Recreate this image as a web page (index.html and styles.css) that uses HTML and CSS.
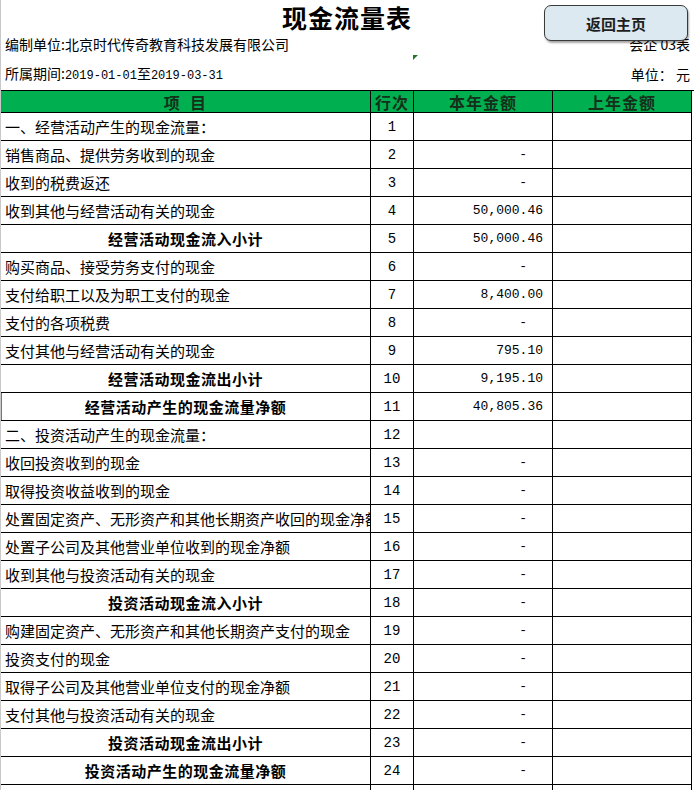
FILE: index.html
```html
<!DOCTYPE html>
<html lang="zh-CN">
<head>
<meta charset="utf-8">
<title>现金流量表</title>
<link rel="stylesheet" href="styles.css">
</head>
<body>
<div class="page">
  <header class="top">
    <h1 class="title">现金流量表</h1>
    <div class="info-row info-row--unit">
      <span class="label">编制单位:北京时代传奇教育科技发展有限公司</span>
      <span class="label">会企 03表</span>
    </div>
    <div class="info-row info-row--period">
      <span class="label">所属期间:<span class="date">2019-01-01</span>至<span class="date">2019-03-31</span></span>
      <span class="label">单位：&nbsp;元</span>
    </div>
    <button class="home-btn" type="button">返回主页</button>
    <span class="cell-flag"></span>
  </header>

  <div class="sheet">
    <div class="cell head">项&nbsp;&nbsp;目</div>
    <div class="cell head">行次</div>
    <div class="cell head">本年金额</div>
    <div class="cell head">上年金额</div>

    <div class="cell item">一、经营活动产生的现金流量：</div><div class="cell no">1</div><div class="cell amt"></div><div class="cell amt"></div>
    <div class="cell item">销售商品、提供劳务收到的现金</div><div class="cell no">2</div><div class="cell amt"><span class="dash">-</span></div><div class="cell amt"></div>
    <div class="cell item">收到的税费返还</div><div class="cell no">3</div><div class="cell amt"><span class="dash">-</span></div><div class="cell amt"></div>
    <div class="cell item">收到其他与经营活动有关的现金</div><div class="cell no">4</div><div class="cell amt">50,000.46</div><div class="cell amt"></div>
    <div class="cell item sub">经营活动现金流入小计</div><div class="cell no">5</div><div class="cell amt">50,000.46</div><div class="cell amt"></div>
    <div class="cell item">购买商品、接受劳务支付的现金</div><div class="cell no">6</div><div class="cell amt"><span class="dash">-</span></div><div class="cell amt"></div>
    <div class="cell item">支付给职工以及为职工支付的现金</div><div class="cell no">7</div><div class="cell amt">8,400.00</div><div class="cell amt"></div>
    <div class="cell item">支付的各项税费</div><div class="cell no">8</div><div class="cell amt"><span class="dash">-</span></div><div class="cell amt"></div>
    <div class="cell item">支付其他与经营活动有关的现金</div><div class="cell no">9</div><div class="cell amt">795.10</div><div class="cell amt"></div>
    <div class="cell item sub">经营活动现金流出小计</div><div class="cell no">10</div><div class="cell amt">9,195.10</div><div class="cell amt"></div>
    <div class="cell item sub selected">经营活动产生的现金流量净额</div><div class="cell no">11</div><div class="cell amt">40,805.36</div><div class="cell amt"></div>
    <div class="cell item">二、投资活动产生的现金流量：</div><div class="cell no">12</div><div class="cell amt"></div><div class="cell amt"></div>
    <div class="cell item">收回投资收到的现金</div><div class="cell no">13</div><div class="cell amt"><span class="dash">-</span></div><div class="cell amt"></div>
    <div class="cell item">取得投资收益收到的现金</div><div class="cell no">14</div><div class="cell amt"><span class="dash">-</span></div><div class="cell amt"></div>
    <div class="cell item">处置固定资产、无形资产和其他长期资产收回的现金净额</div><div class="cell no">15</div><div class="cell amt"><span class="dash">-</span></div><div class="cell amt"></div>
    <div class="cell item">处置子公司及其他营业单位收到的现金净额</div><div class="cell no">16</div><div class="cell amt"><span class="dash">-</span></div><div class="cell amt"></div>
    <div class="cell item">收到其他与投资活动有关的现金</div><div class="cell no">17</div><div class="cell amt"><span class="dash">-</span></div><div class="cell amt"></div>
    <div class="cell item sub">投资活动现金流入小计</div><div class="cell no">18</div><div class="cell amt"><span class="dash">-</span></div><div class="cell amt"></div>
    <div class="cell item">购建固定资产、无形资产和其他长期资产支付的现金</div><div class="cell no">19</div><div class="cell amt"><span class="dash">-</span></div><div class="cell amt"></div>
    <div class="cell item">投资支付的现金</div><div class="cell no">20</div><div class="cell amt"><span class="dash">-</span></div><div class="cell amt"></div>
    <div class="cell item">取得子公司及其他营业单位支付的现金净额</div><div class="cell no">21</div><div class="cell amt"><span class="dash">-</span></div><div class="cell amt"></div>
    <div class="cell item">支付其他与投资活动有关的现金</div><div class="cell no">22</div><div class="cell amt"><span class="dash">-</span></div><div class="cell amt"></div>
    <div class="cell item sub">投资活动现金流出小计</div><div class="cell no">23</div><div class="cell amt"><span class="dash">-</span></div><div class="cell amt"></div>
    <div class="cell item sub">投资活动产生的现金流量净额</div><div class="cell no">24</div><div class="cell amt"><span class="dash">-</span></div><div class="cell amt"></div>
    <div class="cell item">三、筹资活动产生的现金流量：</div><div class="cell no">25</div><div class="cell amt"></div><div class="cell amt"></div>
  </div>
</div>
</body>
</html>
```

FILE: styles.css
```css
html, body {
  margin: 0;
  padding: 0;
  background: #ffffff;
  overflow: hidden;
}

.page {
  position: relative;
  width: 693px;
  height: 790px;
  border-left: 1px solid #c9c9c9;
  font-family: "Noto Sans CJK SC", "Noto Sans", sans-serif;
  color: #000;
  overflow: hidden;
}

.top {
  position: relative;
  height: 90px;
  display: flex;
  flex-direction: column;
}

.title {
  margin: 0 0 0 -1px;
  height: 34px;
  line-height: 34px;
  font-size: 25px;
  font-weight: 700;
  text-align: center;
  letter-spacing: 1px;
}

.info-row {
  display: flex;
  justify-content: space-between;
  align-items: center;
  padding: 0 4px;
  font-size: 14px;
}

.info-row--unit {
  height: 20px;
}

.info-row--period {
  height: 32px;
  padding-top: 4px;
}

.label {
  line-height: 20px;
  white-space: nowrap;
}

.date {
  font-family: "Liberation Mono", monospace;
  font-size: 12px;
}

.home-btn {
  position: absolute;
  left: 543px;
  top: 5px;
  width: 144px;
  height: 36px;
  border: 1px solid #3a3a3a;
  border-radius: 7px;
  background: #dce9f0;
  box-shadow: 1px 2px 2px rgba(0, 0, 0, 0.35);
  font-family: "Noto Sans CJK SC", sans-serif;
  font-size: 15px;
  font-weight: 700;
  color: #1e1e1e;
  padding: 0;
}

.cell-flag {
  position: absolute;
  left: 412px;
  top: 55px;
  width: 0;
  height: 0;
  border-top: 5px solid #1f7a2a;
  border-right: 5px solid transparent;
}

.sheet {
  display: grid;
  grid-template-columns: 370px 43px 139px 139px;
  grid-template-rows: 22px;
  grid-auto-rows: 28px;
  border-top: 1px solid #000;
  font-size: 15px;
}

.cell {
  box-sizing: border-box;
  border-right: 1px solid #000;
  border-bottom: 1px solid #000;
  display: flex;
  align-items: center;
  white-space: nowrap;
  overflow: hidden;
  line-height: 20px;
}

.head {
  background: #00b050;
  justify-content: center;
  font-size: 16px;
  line-height: 18px;
  font-weight: 700;
  letter-spacing: 1px;
  color: #14301a;
  overflow: visible;
}

.item {
  padding-left: 4px;
  position: relative;
}

.item.sub {
  justify-content: center;
  font-weight: 700;
  letter-spacing: 0.5px;
  padding-left: 0;
}

.item.selected {
  overflow: visible;
}

.item.selected::before {
  content: "";
  position: absolute;
  left: -1px;
  top: 0;
  bottom: 0;
  width: 2px;
  background: #21a366;
}

.no {
  justify-content: center;
  font-family: "Liberation Mono", monospace;
  font-size: 14px;
}

.amt {
  justify-content: flex-end;
  padding-right: 9px;
  font-family: "Liberation Mono", monospace;
  font-size: 13px;
}

.dash {
  padding-right: 16px;
}
```
